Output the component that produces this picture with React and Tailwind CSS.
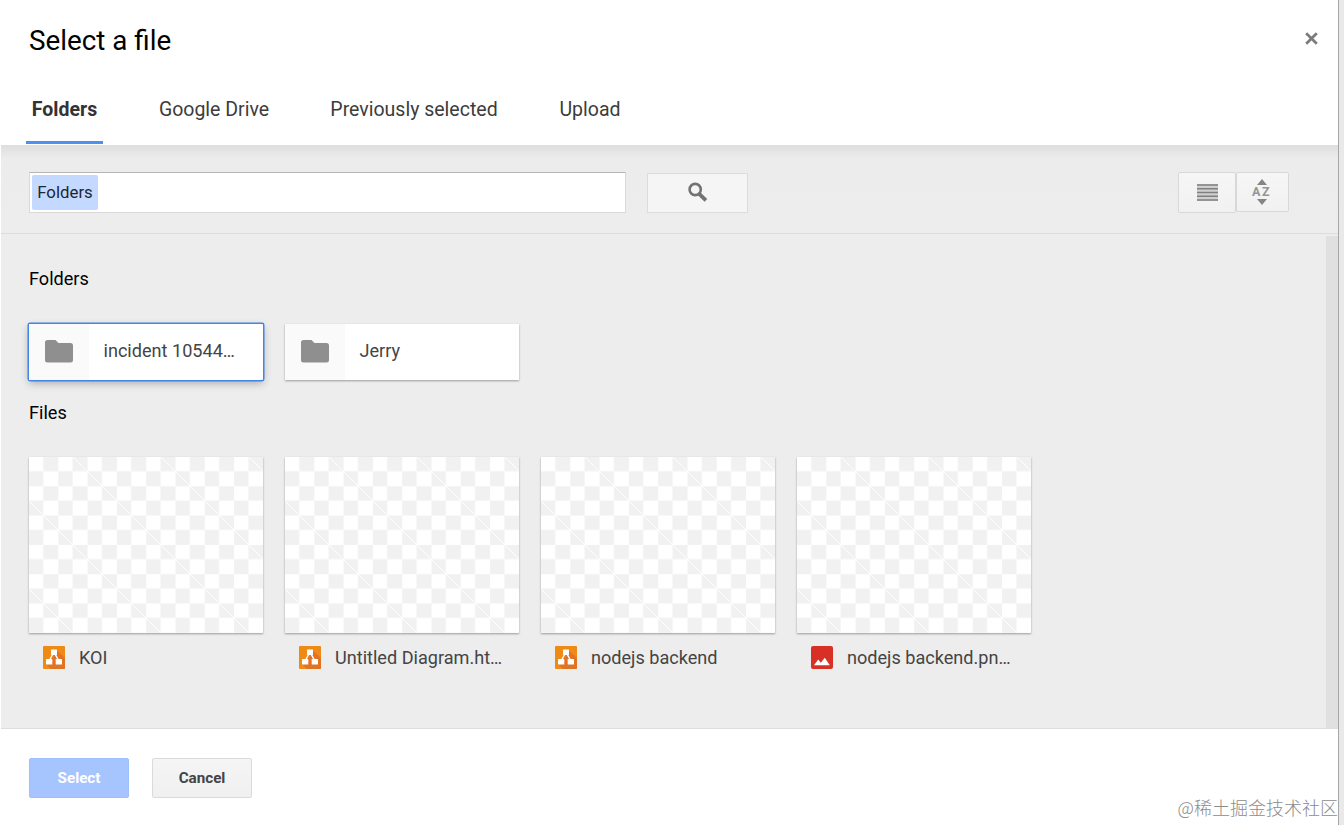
import { useState } from 'react'

const tabs = [
  { name: 'Folders', box: 'w-[77px]', active: true },
  { name: 'Google Drive', box: 'ml-[50px] w-[122px]' },
  { name: 'Previously selected', box: 'ml-[50px] w-[178px]' },
  { name: 'Upload', box: 'ml-[51px] w-[72px]' },
]

const folders = ['incident 10544…', 'Jerry']

const files = [
  { name: 'KOI', type: 'diagram' },
  { name: 'Untitled Diagram.ht…', type: 'diagram' },
  { name: 'nodejs backend', type: 'diagram' },
  { name: 'nodejs backend.pn…', type: 'image' },
]

function FolderIcon() {
  return (
    <svg width="28" height="23" viewBox="0 0 28 23" fill="#8f8f8f">
      <path d="M2.5 0H10.5L13.5 3H25.5A2.5 2.5 0 0 1 28 5.5v14.5a2.5 2.5 0 0 1-2.5 2.5h-23A2.5 2.5 0 0 1 0 20V2.5A2.5 2.5 0 0 1 2.5 0z" />
    </svg>
  )
}

function DiagramIcon() {
  return (
    <svg width="22" height="23" viewBox="0 0 22 23">
      <rect width="22" height="23" rx="1" fill="#ef8a14" />
      <path d="M13.5 4L22 12v10a1 1 0 0 1-1 1H8l-4.5-4.5L9 9z" fill="#e17424" />
      <path d="M10 8l-4 7M12 8l4 7" stroke="#fff" strokeWidth="1.5" fill="none" />
      <rect x="8" y="3.5" width="6" height="5.5" rx="0.6" fill="#fff" />
      <rect x="3" y="13" width="6.3" height="5.5" rx="0.6" fill="#fff" />
      <rect x="12.7" y="13" width="6.3" height="5.5" rx="0.6" fill="#fff" />
    </svg>
  )
}

function ImageIcon() {
  return (
    <svg width="22" height="23" viewBox="0 0 22 23">
      <rect width="22" height="23" rx="2" fill="#d93025" />
      <path d="M3 19.2l4.2-5.8 2.6 3.4 4-5 5 7.4z" fill="#fff" />
    </svg>
  )
}

// transparent-image checkerboard with thin diagonals over the grey squares
function Checkerboard({ id }) {
  return (
    <svg width="234" height="176" viewBox="0 0 234 176" className="block">
      <defs>
        <pattern id={`check-${id}`} width="29.3" height="29.3" patternUnits="userSpaceOnUse">
          <rect width="29.3" height="29.3" fill="#fff" />
          <rect x="14.3" y="0" width="15" height="14.3" fill="#f1f1f1" />
          <rect x="0" y="14.3" width="14.3" height="15" fill="#f1f1f1" />
        </pattern>
      </defs>
      <rect width="234" height="176" fill={`url(#check-${id})`} />
      <path
        d="M0 132l44 44M0 44l132 132M44 0l176 176M132 0l102 102M220 0l14 14"
        stroke="#fff"
        strokeWidth="0.9"
      />
    </svg>
  )
}

export default function App() {
  const [selected, setSelected] = useState(0)

  return (
    <div className="flex h-[825px] w-[1344px] overflow-hidden bg-[#e9e9e9] font-['Roboto',sans-serif] text-black">
      <div className="relative flex w-[1339px] flex-col border-r border-[#a6a6a6] bg-white pl-px">
        {/* header */}
        <header className="flex h-[145px] shrink-0 flex-col justify-between">
          <div className="flex items-start justify-between pl-7 pr-5 pt-[22px]">
            <h1 className="text-[27.8px] leading-[37px]">Select a file</h1>
            <button className="mt-2.5" aria-label="Close">
              <svg width="13" height="13" viewBox="0 0 13 13" stroke="#7b7b7b" strokeWidth="2.7">
                <path d="M1.2 1.2l10.6 10.6M11.8 1.2L1.2 11.8" />
              </svg>
            </button>
          </div>
          <nav className="mb-px ml-[25px] flex">
            {tabs.map(tab => (
              <button
                key={tab.name}
                className={`h-[55px] whitespace-nowrap border-b-[3px] pb-2.5 text-center text-[19.5px] ${tab.box} ${
                  tab.active ? 'border-[#4d90f0] font-bold text-[#333]' : 'border-transparent text-[#3c3c3c]'
                }`}
              >
                {tab.name}
              </button>
            ))}
          </nav>
        </header>

        {/* search bar */}
        <div className="flex h-[89px] shrink-0 items-start border-b border-[#dcdcdc] bg-linear-to-b from-[#dedede] via-[#ececec] via-15% to-[#ededed] pl-7 pt-[27px]">
          <div className="flex h-[41px] w-[597px] border border-[#d9d9d9] border-t-[#b5b5b5] bg-white p-0.5">
            <span className="flex h-[35px] w-[66px] items-center justify-center rounded-xs bg-[#c3d9ff] text-[16.8px] text-[#1c2733]">
              Folders
            </span>
          </div>
          <button className="ml-[21px] mt-px flex h-10 w-[101px] items-center justify-center border border-[#dcdcdc] bg-[#f5f5f5]">
            <svg width="20" height="20" viewBox="0 0 20 20" fill="none" stroke="#737373" className="mb-0.5">
              <circle cx="7.2" cy="7.5" r="5.6" strokeWidth="2.6" />
              <path d="M11.2 11.8L17.9 18.3" strokeWidth="3.8" />
            </svg>
          </button>
          <div className="ml-[430px] flex items-start">
            <button className="flex h-[41px] w-[58px] items-center justify-center rounded-xs border border-[#d8d8d8] bg-linear-to-b from-[#f6f6f6] to-[#f1f1f1]">
              <svg width="21" height="17" viewBox="0 0 21 17">
                <rect width="21" height="17" fill="#cfcfcf" />
                <path d="M0 1h21M0 4.75h21M0 8.5h21M0 12.25h21M0 16h21" stroke="#808080" strokeWidth="1.5" />
              </svg>
            </button>
            <button className="flex h-10 w-[53px] flex-col items-center justify-center gap-[3px] rounded-xs border border-[#d8d8d8] bg-linear-to-b from-[#f6f6f6] to-[#f1f1f1] pb-px pr-0.5">
              <svg width="10" height="6" viewBox="0 0 10 6" fill="#858585" className="shrink-0"><path d="M5 0l5 6H0z" /></svg>
              <span className="text-[12.5px] font-bold leading-[8px] tracking-[1.5px] text-[#959595]">AZ</span>
              <svg width="10" height="6" viewBox="0 0 10 6" fill="#858585" className="shrink-0"><path d="M0 0h10L5 6z" /></svg>
            </button>
          </div>
        </div>

        {/* file list */}
        <main className="flex h-[495px] shrink-0 border-b border-[#dedede] bg-[#ededed]">
          <div className="flex-1 pl-7 pt-[33px] text-[18.1px]">
            <h2 className="leading-6">Folders</h2>
            <div className="mt-[33px] flex gap-[22px]">
              {folders.map((name, i) => (
                <button
                  key={name}
                  onClick={() => setSelected(i)}
                  className={`flex h-14 w-[234px] items-center bg-white text-[#444] ${
                    selected === i
                      ? 'rounded-[1px] shadow-[0_0_0_1.5px_#4285e4,0_3px_8px_rgba(0,0,0,0.3)]'
                      : 'shadow-[0_1px_2px_rgba(0,0,0,0.35)]'
                  }`}
                >
                  <span className="flex h-full w-[60px] items-center justify-center bg-[#fafafa] pb-px">
                    <FolderIcon />
                  </span>
                  <span className="mb-[3px] ml-[14.5px]">{name}</span>
                </button>
              ))}
            </div>
            <h2 className="mt-[21px] leading-6">Files</h2>
            <div className="mt-8 flex gap-[22px]">
              {files.map((file, i) => (
                <div key={file.name} className="w-[234px]">
                  <div className="shadow-[0_1px_2px_rgba(0,0,0,0.35)]">
                    <Checkerboard id={i} />
                  </div>
                  <div className="mt-3 flex h-6 items-center pl-3.5 text-[#444]">
                    {file.type === 'image' ? <ImageIcon /> : <DiagramIcon />}
                    <span className="ml-3.5 mt-px whitespace-nowrap leading-6">{file.name}</span>
                  </div>
                </div>
              ))}
            </div>
          </div>
          <div className="mt-0.5 w-3 bg-[#e0e0e0]" />
        </main>

        {/* actions */}
        <footer className="flex gap-[23px] pl-7 pt-[29px] text-[15.2px] font-bold">
          <button className="h-10 w-[100px] rounded-xs border border-[#9dbffb] bg-[#a6c5ff] text-white">Select</button>
          <button className="h-10 w-[100px] rounded-xs border border-[#dadada] bg-linear-to-b from-[#f5f5f5] to-[#f0f0f0] text-[#444]">
            Cancel
          </button>
        </footer>

        <span className="absolute bottom-1 right-0 whitespace-nowrap font-['Noto_Sans_CJK_SC',sans-serif] text-[18px] font-light leading-7 text-[#8c8c8c]">
          @稀土掘金技术社区
        </span>
      </div>
    </div>
  )
}
